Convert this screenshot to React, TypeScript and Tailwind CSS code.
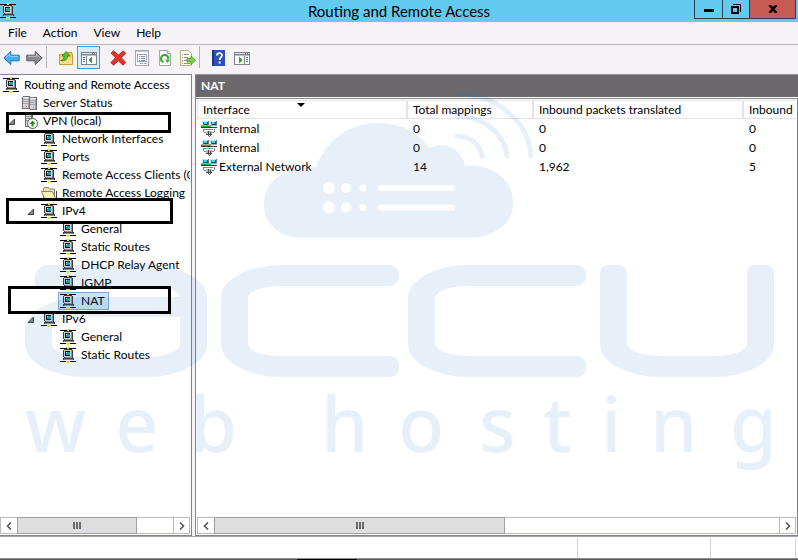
import type { ReactNode } from "react"
import clsx from "clsx"

type IconName = "net" | "servers" | "serverUp" | "folder"

interface TreeItem {
  label: string
  level: 0 | 1 | 2 | 3
  icon: IconName
  open?: boolean
  selected?: boolean
  mark?: string
}

const tree: TreeItem[] = [
  { label: "Routing and Remote Access", level: 0, icon: "net" },
  { label: "Server Status", level: 1, icon: "servers" },
  { label: "VPN (local)", level: 1, icon: "serverUp", open: true, mark: "top-0 left-[6px] w-[165px] h-[21px]" },
  { label: "Network Interfaces", level: 2, icon: "net" },
  { label: "Ports", level: 2, icon: "net" },
  { label: "Remote Access Clients (0)", level: 2, icon: "net" },
  { label: "Remote Access Logging", level: 2, icon: "folder" },
  { label: "IPv4", level: 2, icon: "net", open: true, mark: "-top-1 left-[6px] w-[167px] h-[26px]" },
  { label: "General", level: 3, icon: "net" },
  { label: "Static Routes", level: 3, icon: "net" },
  { label: "DHCP Relay Agent", level: 3, icon: "net" },
  { label: "IGMP", level: 3, icon: "net" },
  { label: "NAT", level: 3, icon: "net", selected: true, mark: "-top-1.5 left-[8px] w-[163px] h-[28px]" },
  { label: "IPv6", level: 2, icon: "net", open: true },
  { label: "General", level: 3, icon: "net" },
  { label: "Static Routes", level: 3, icon: "net" },
]

const indent = ["pl-[2px]", "pl-[21px]", "pl-[40px]", "pl-[59px]"]
const expanderPos = ["left-0", "left-[8px]", "left-[27px]", "left-[46px]"]

const columns = ["Interface", "Total mappings", "Inbound packets translated", "Inbound"]
const rows = [
  ["Internal", "0", "0", "0"],
  ["Internal", "0", "0", "0"],
  ["External Network", "14", "1,962", "5"],
]

function Pix({ children }: { children: ReactNode }) {
  return (
    <svg width="16" height="16" viewBox="0 0 16 16" className="shrink-0" shapeRendering="crispEdges" aria-hidden="true">
      {children}
    </svg>
  )
}

function NetIcon() {
  return (
    <Pix>
      <path fill="#000" d="M0 1h16v1H0zM0 14h16v1H0z" />
      <path fill="#f2e600" d="M6 0h4v1H6zM7 1h2v1H7zM6 14h4v1H6zM7 15h2v1H7z" />
      <path fill="#3a3a3e" d="M4 2h8v1h1v8h1v2H3v-2h1v-1H3V3h1z" />
      <path fill="#d2d2d8" d="M4 3h7v7H4z" />
      <path fill="#8e8e96" d="M11 3h1v8h-1zM5 10h6v1H5zM4 12h9v1H4z" />
      <path fill="#111" d="M5 4h5v5H5z" />
      <path fill="#14a6a6" d="M6 5h4v3H6z" />
      <path fill="#8ff" d="M6 5h1v1H6z" />
    </Pix>
  )
}

function ServersIcon() {
  return (
    <Pix>
      <path fill="#6d6d72" d="M1 1h7v1h7v13H8v-1H0V2h1z" />
      <path fill="#d4d4d8" d="M1 2h5v11H1zM8 3h5v11H8z" />
      <path fill="#f6f6f8" d="M1 2h6v1H1zM8 3h6v1H8z" />
      <path fill="#a4a4aa" d="M1 4h5v1H1zM1 6h5v1H1zM1 8h5v1H1zM8 5h5v1H8zM8 7h5v1H8zM8 9h5v1H8zM6 3h1v10H6zM13 4h1v10h-1z" />
      <path fill="#e2574c" d="M4 11h1v1H4zM11 12h1v1h-1z" />
    </Pix>
  )
}

function ServerUpIcon() {
  return (
    <svg width="16" height="16" viewBox="0 0 16 16" className="shrink-0" aria-hidden="true">
      <path fill="#6d6d72" d="M3 0h8v14H3z" />
      <path fill="#dcdce0" d="M4 1h5v12H4z" />
      <path fill="#909096" d="M4 3h5v1H4zM4 5h5v1H4zM4 7h5v1H4z" />
      <circle cx="10.500" cy="10.500" r="5" fill="#fff" stroke="#55555a" />
      <path fill="#128a1e" d="M10.500 7.500l3 3.500h-2v2.500h-2V11h-2z" />
    </svg>
  )
}

function FolderIcon() {
  return (
    <svg width="16" height="16" viewBox="0 0 16 16" className="shrink-0" aria-hidden="true">
      <path fill="#e8e2ac" stroke="#85837a" d="M2.500 13.500v-10l1-1h4l1 1.500h5v9.500z" />
      <path fill="#f7f1b4" stroke="#85837a" d="M.5 6.500h11l3 7h-11z" />
      <path stroke="#45454a" d="M3 14.500h12.500V6" fill="none" />
    </svg>
  )
}

function NatIcon() {
  return (
    <Pix>
      <path fill="#707076" d="M1 0h7v5H1zM9 0h7v5H9z" />
      <path fill="#dcdce0" d="M1 0h6v1H1zM1 1h1v3H1zM9 0h6v1H9zM9 1h1v3H9z" />
      <path fill="#0c4a55" d="M3 1h4v3H3zM11 1h4v3h-4z" />
      <path fill="#2fe0e8" d="M3 1h3v2H3zM11 1h3v2h-3z" />
      <path fill="#a9a9ae" d="M0 4h16v1H0z" />
      <path fill="#3a3a3e" d="M0 6h16v1H0z" />
      <path fill="#12b52a" d="M0 5h10v1H0z" />
      <path fill="#85858b" d="M2 8h1v3H2zM3 11h2v1H3zM13 8h1v3h-1zM11 11h2v1h-2zM3 8h9v1H3z" />
      <path fill="#b9b9be" d="M5 10h6v3H5z" />
      <path fill="#4b4b50" d="M7 10h1v5H7zM9 11h1v4H9zM5 13h6v1H5zM8 15h1v1H8z" />
    </Pix>
  )
}

const icons: Record<IconName, () => ReactNode> = {
  net: NetIcon,
  servers: ServersIcon,
  serverUp: ServerUpIcon,
  folder: FolderIcon,
}

function ArrowIcon({ fill, stroke, flip }: { fill: string; stroke: string; flip?: boolean }) {
  return (
    <svg width="17" height="16" viewBox="0 0 17 16" className={clsx(flip && "-scale-x-100")} aria-hidden="true">
      <path d="M.8 8l7-6.500v3.700h8.400v5.600H7.800v3.700z" fill={fill} stroke={stroke} strokeLinejoin="round" />
      <path d="M3 7.500l3.700-3.400v2.300h8.300" fill="none" stroke="#fff" strokeOpacity=".45" />
    </svg>
  )
}

function UpFolderIcon() {
  return (
    <svg width="16" height="16" viewBox="0 0 16 16" aria-hidden="true">
      <path d="M1.500 14.500V4.500h6l1-2h5l1 2v10z" fill="#f3c65c" stroke="#c89a3c" />
      <path d="M2 7.500h12v6.500H2z" fill="#fbdc8b" />
      <path d="M2.500 10.500c2.500-.5 3.500-2 3.500-4.500H4L8 1.500l4 4.500H9.500c0 4-3 5.500-7 4.500z" fill="#4fc22e" stroke="#2b8a1b" strokeWidth=".8" />
    </svg>
  )
}

function PanelIcon({ right }: { right?: boolean }) {
  return (
    <Pix>
      <path fill="#7f838c" d="M0 2h16v13H0z" />
      <path fill="#fbfcfd" d="M1 6h14v8H1z" />
      <path fill="#dfe3ea" d="M1 3h10v1H1z" />
      <path fill="#fff" d="M12 3h1v1h-1zM14 3h1v1h-1z" />
      <path fill="#b9bec8" d="M1 5h14v1H1z" />
      {right ? (
        <>
          <path fill="#7f838c" d="M10 6h1v8h-1z" />
          <path fill="#3f6cab" d="M12 7h2v1h-2zM12 9h2v1h-2zM12 11h2v1h-2z" />
          <path fill="#32a52a" d="M5 7h1v1h1v1h1v2H7v1H6v1H5z" />
        </>
      ) : (
        <>
          <path fill="#7f838c" d="M5 6h1v8H5z" />
          <path fill="#3f6cab" d="M2 7h2v1H2zM2 9h2v1H2zM2 11h2v1H2z" />
          <path fill="#32a52a" d="M10 7h1v6h-1v-1H9v-1H8V9h1V8h1z" />
        </>
      )}
    </Pix>
  )
}

function DeleteIcon() {
  return (
    <svg width="17" height="16" viewBox="0 0 17 16" aria-hidden="true">
      <path
        d="M3.500.8l5 4.200 4.600-4.200 2.700 2.400-4.500 4.500 4.500 5-3 2.500-4.500-4.500-4.800 4.500-2.700-2.500 4.700-5L1 3.200z"
        fill="#e0342c"
        stroke="#b81d18"
        strokeWidth=".8"
      />
    </svg>
  )
}

function PropertiesIcon() {
  return (
    <Pix>
      <path fill="#a3a7b0" d="M1 0h14v16H1z" />
      <path fill="#fafbfc" d="M2 1h12v14H2z" />
      <path fill="#c3c9d4" d="M2 1h12v1H2z" />
      <path fill="#a3a7b0" d="M3 4h10v8H3z" />
      <path fill="#fff" d="M4 5h8v6H4z" />
      <path fill="#7f8bab" d="M5 6h1v1H5zM7 6h4v1H7zM5 8h1v1H5zM7 8h4v1H7zM5 10h1v1H5zM7 10h4v1H7z" />
      <path fill="#5cc0e8" d="M6 13h3v1H6zM10 13h3v1h-3z" />
    </Pix>
  )
}

function RefreshIcon() {
  return (
    <svg width="16" height="16" viewBox="0 0 16 16" aria-hidden="true">
      <path d="M2.500.5h8l3 3v12h-11z" fill="#fff" stroke="#a5a8ae" />
      <path d="M10.500.5v3h3" fill="#e9ebee" stroke="#a5a8ae" />
      <path d="M6.500 12a3.600 3.600 0 1 1 4.700-3" fill="none" stroke="#37ab2e" strokeWidth="2" />
      <path d="M8 9.500h5.200L10.500 13z" fill="#37ab2e" />
    </svg>
  )
}

function ExportIcon() {
  return (
    <svg width="16" height="16" viewBox="0 0 16 16" aria-hidden="true">
      <path d="M.5.5h8l3 3v12H.5z" fill="#fffbe6" stroke="#b8b294" />
      <path d="M2 4.500h1M4 4.500h5M2 7.500h1M4 7.500h4M2 10.500h1M4 10.500h4M2 13.500h1M4 13.500h6" stroke="#8a8fa0" />
      <path d="M7 8.500h4V5.800l4.600 4.400-4.600 4.400V12H7z" fill="#7ad04b" stroke="#3f9a26" strokeWidth=".8" />
    </svg>
  )
}

function HelpIcon() {
  return (
    <svg width="14" height="16" viewBox="0 0 14 16" aria-hidden="true">
      <path d="M0 0h13v16H0z" fill="#2e4fb4" />
      <path d="M0 0h2v16H0z" fill="#1d3484" />
      <path d="M5 5.500C5 2.500 10 2.500 10 5.300c0 2-2.400 2.200-2.400 4.700" fill="none" stroke="#fff" strokeWidth="1.800" />
      <path d="M6.600 11.500h2v2h-2z" fill="#fff" />
    </svg>
  )
}

function ToolButton({ label, active, children }: { label: string; active?: boolean; children: ReactNode }) {
  return (
    <button
      type="button"
      aria-label={label}
      className={clsx(
        "flex h-[23px] w-[23px] shrink-0 items-center justify-center",
        active && "border border-[#3a9fd4] bg-[#d6ecf8]"
      )}
    >
      {children}
    </button>
  )
}

function Chevron({ right }: { right?: boolean }) {
  return (
    <svg width="6" height="8" viewBox="0 0 6 8" className={clsx(right && "-scale-x-100")} aria-hidden="true">
      <path d="M5 .5L1.500 4 5 7.500" fill="none" stroke="#555" strokeWidth="1.600" />
    </svg>
  )
}

function ScrollBar({ thumb }: { thumb: string }) {
  return (
    <div className="flex h-[17px] shrink-0 border border-[#b9b9b9] bg-white">
      <button type="button" aria-label="Scroll left" className="flex w-4 items-center justify-center">
        <Chevron />
      </button>
      <div className="-my-px flex min-w-0 flex-1">
        <div className={clsx("flex items-center justify-center gap-px border border-[#a0a0a0] bg-[#dedede]", thumb)}>
          <span className="h-[7px] w-[2px] bg-[#6b6b6b]" />
          <span className="h-[7px] w-[2px] bg-[#6b6b6b]" />
          <span className="h-[7px] w-[2px] bg-[#6b6b6b]" />
        </div>
      </div>
      <button type="button" aria-label="Scroll right" className="flex w-4 items-center justify-center border-l border-[#b9b9b9]">
        <Chevron right />
      </button>
    </div>
  )
}

function TreeRow({ item }: { item: TreeItem }) {
  const Icon = icons[item.icon]
  return (
    <li className="relative h-[18px]">
      {item.open && (
        <svg width="8" height="8" viewBox="0 0 8 8" className={clsx("absolute top-[6px]", expanderPos[item.level])} aria-hidden="true">
          <path d="M6.500 1v5.500H1z" fill="#8a8a8a" stroke="#333" strokeWidth=".9" />
        </svg>
      )}
      <div className={clsx("flex h-full", indent[item.level])}>
        <button
          type="button"
          className={clsx(
            "flex h-[18px] items-center gap-[5px] border pr-[3px] whitespace-nowrap",
            item.selected ? "-ml-px border-[#7da7d9] bg-[#cce4fa] pl-px" : "border-transparent"
          )}
        >
          <Icon />
          <span>{item.label}</span>
        </button>
      </div>
      {item.mark && <span className={clsx("absolute z-10 border-3 border-black", item.mark)} />}
    </li>
  )
}

function Watermark() {
  return (
    <div
      aria-hidden="true"
      className="pointer-events-none absolute inset-0 flex flex-col items-center overflow-hidden pt-[90px] text-[#1e78c8] opacity-10"
    >
      <svg width="271" height="150" viewBox="0 0 271 150" className="shrink-0">
        <mask id="slots">
          <path fill="#fff" d="M0 0h271v150H0z" />
          <circle cx="65" cy="98" r="6" />
          <circle cx="82" cy="98" r="5" />
          <circle cx="99" cy="98" r="3.500" />
          <circle cx="65" cy="117.500" r="6" />
          <circle cx="82" cy="117.500" r="5" />
          <circle cx="99" cy="117.500" r="3.500" />
          <path d="M117 98h71M117 117.500h71" stroke="#000" strokeWidth="6" strokeLinecap="round" />
        </mask>
        <path
          mask="url(#slots)"
          fill="currentColor"
          d="M31 147.500C12 144 0 132 0 115C0 93 16 77 52 77C62 50 85 33 113 33C136 33 155 42 165 58C180 51 198 58 201 76C228 73 249 90 249 112C250 132 235 143 214 147.500Z"
        />
        <g fill="none" stroke="currentColor" strokeWidth="5" strokeLinecap="round">
          <path d="M193 46A25 23 0 0 1 218 66" />
          <path d="M193 26A50 44 0 0 1 243 66" />
          <path d="M193 4A74 66 0 0 1 267 66" />
        </g>
      </svg>

      <div className="mt-[25px] flex h-[112px] shrink-0 gap-3.5">
        <div className="grid w-[182px] *:[grid-area:1/1]">
          <div className="ml-[10px] rounded-tl-[12px] rounded-r-[60px_33px] border-t-[21px] border-r-[27px] border-current" />
          <div className="mt-[32px] rounded-l-[60px_33px] rounded-br-[60px_33px] border-x-[27px] border-y-[20px] border-current" />
        </div>
        <div className="flex gap-[9px]">
          <Bracket />
          <Bracket />
        </div>
        <div className="flex w-[174px] flex-col">
          <div className="flex justify-between">
            <span className="h-[50px] w-[27px] rounded-t-[8px] bg-current" />
            <span className="h-[50px] w-[27px] rounded-t-[8px] bg-current" />
          </div>
          <div className="flex-1 rounded-b-[60px_33px] border-x-[27px] border-b-[21px] border-current" />
        </div>
      </div>

      <svg width="770" height="140" viewBox="-10 0 770 140" className="-mt-5 shrink-0">
        <text
          x="1 91 166 226 297 374 455 519 577 626 706"
          y="95"
          fill="currentColor"
          fontSize="76"
          fontWeight="500"
          fontFamily="'Noto Sans', 'Open Sans', sans-serif"
        >
          web hosting
        </text>
      </svg>
    </div>
  )
}

function Bracket() {
  return (
    <div className="flex w-[178px]">
      <div className="w-[100px] rounded-l-[60px_33px] border-y-[21px] border-l-[27px] border-current" />
      <div className="flex flex-1 flex-col justify-between">
        <span className="h-[21px] rounded-r-[9px] bg-current" />
        <span className="h-[21px] rounded-r-[9px] bg-current" />
      </div>
    </div>
  )
}

export default function App() {
  return (
    <div className="relative flex min-h-screen flex-col overflow-hidden bg-[#f6f3f7] font-['Lato','Noto_Sans',sans-serif] text-[12px] leading-4 text-black">
      <header className="grid h-[22px] grid-cols-[1fr_auto_1fr] bg-[#63caf0]">
        <div className="flex items-center">
          <NetIcon />
        </div>
        <h1 className="text-[15px] leading-[22px]">Routing and Remote Access</h1>
        <div className="flex h-[19px] justify-end pr-[2px]">
          <button type="button" aria-label="Minimize" className="flex w-[29px] items-center justify-center border border-t-0 border-[#2f3f4a]">
            <span className="mt-[3px] h-[3px] w-[10px] bg-black" />
          </button>
          <button type="button" aria-label="Restore" className="flex w-[26px] items-center justify-center border-b border-[#2f3f4a]">
            <svg width="10" height="10" viewBox="0 0 10 10" aria-hidden="true">
              <path d="M1 3h6v6H1z" fill="none" stroke="#000" strokeWidth="2" />
              <path d="M2 .5h7.500V8" fill="none" stroke="#000" />
            </svg>
          </button>
          <button type="button" aria-label="Close" className="flex w-[47px] items-center justify-center border border-t-0 border-[#2f3f4a] bg-[#c75a53]">
            <svg width="10" height="8" viewBox="0 0 10 8" aria-hidden="true">
              <path d="M1.500 0l7 8M8.500 0l-7 8" stroke="#000" strokeWidth="2.500" />
            </svg>
          </button>
        </div>
      </header>

      <nav className="flex h-[23px] items-center gap-4 border-b border-[#b4b8b9] pl-2">
        <button type="button">File</button>
        <button type="button">Action</button>
        <button type="button">View</button>
        <button type="button">Help</button>
      </nav>

      <div className="flex h-[29px] items-start pt-px">
        <ToolButton label="Back">
          <ArrowIcon fill="#3fb0f0" stroke="#2176b8" />
        </ToolButton>
        <ToolButton label="Forward">
          <ArrowIcon fill="#8a8a8c" stroke="#5c5c60" flip />
        </ToolButton>
        <span className="mr-[7px] h-[22px] w-px bg-[#b4b4b8]" />
        <ToolButton label="Up one level">
          <UpFolderIcon />
        </ToolButton>
        <ToolButton label="Show or hide console tree" active>
          <PanelIcon />
        </ToolButton>
        <span className="w-[7px]" />
        <ToolButton label="Delete">
          <DeleteIcon />
        </ToolButton>
        <ToolButton label="Properties">
          <PropertiesIcon />
        </ToolButton>
        <ToolButton label="Refresh">
          <RefreshIcon />
        </ToolButton>
        <ToolButton label="Export list">
          <ExportIcon />
        </ToolButton>
        <span className="mr-[7px] h-[22px] w-px bg-[#b4b4b8]" />
        <ToolButton label="Help">
          <HelpIcon />
        </ToolButton>
        <ToolButton label="Show or hide action pane">
          <PanelIcon right />
        </ToolButton>
      </div>

      <main className="flex flex-1 gap-[3px]">
        <aside className="flex w-[192px] shrink-0 flex-col border-y border-r border-[#83838e] bg-white pr-px pb-px">
          <ul className="flex-1 overflow-hidden pt-px">
            {tree.map((item, i) => (
              <TreeRow key={i} item={item} />
            ))}
          </ul>
          <ScrollBar thumb="w-[120px]" />
        </aside>

        <section className="flex min-w-0 flex-1 flex-col border-l border-[#83838e] bg-white">
          <h2 className="h-[23px] border-t border-[#98969a] bg-[#6c696c] pl-[5px] leading-[22px] font-bold text-white">NAT</h2>
          <div className="mt-px flex min-h-0 flex-1 flex-col border-y border-r border-[#83838e] pt-px pr-px pb-px pl-px">
            <div className="flex-1 overflow-hidden">
              <table className="w-full min-w-[600px] table-fixed border-separate border-spacing-0 text-left">
                <colgroup>
                  <col className="w-[211px]" />
                  <col className="w-[126px]" />
                  <col className="w-[210px]" />
                  <col />
                </colgroup>
                <thead>
                  <tr>
                    {columns.map((name, i) => (
                      <th
                        key={name}
                        scope="col"
                        className="relative h-[19px] border-y border-r-2 border-[#e6e1e6] pl-[5px] font-normal whitespace-nowrap first:border-l last:border-r-0"
                      >
                        {name}
                        {i === 0 && (
                          <span className="absolute top-[2px] left-[99px] border-x-4 border-t-4 border-x-transparent border-t-black" />
                        )}
                      </th>
                    ))}
                  </tr>
                </thead>
                <tbody>
                  {rows.map((row, r) => (
                    <tr key={r} className="h-[19px]">
                      {row.map((cell, c) => (
                        <td key={c} className={clsx("whitespace-nowrap", c === 0 ? "pl-[4px]" : "pl-[5px]")}>
                          {c === 0 ? (
                            <div className="flex items-center gap-[2px]">
                              <NatIcon />
                              {cell}
                            </div>
                          ) : (
                            cell
                          )}
                        </td>
                      ))}
                    </tr>
                  ))}
                </tbody>
              </table>
            </div>
            <ScrollBar thumb="w-[291px]" />
          </div>
        </section>
      </main>

      <footer className="border-t border-[#a3a3a8] bg-white">
        <div className="flex h-[21px] pt-px pr-[2px]">
          <span className="flex-1 border-r border-[#d4d4d4]" />
          <span className="w-[133px] border-r border-[#d4d4d4]" />
          <span className="w-[85px] border-r border-[#d4d4d4]" />
        </div>
        <div className="flex h-[2px] justify-start border-t border-[#8f8f8f] bg-[#5a5a5a] pl-[297px]">
          <span className="w-[60px] bg-black" />
        </div>
      </footer>

      <Watermark />
    </div>
  )
}
